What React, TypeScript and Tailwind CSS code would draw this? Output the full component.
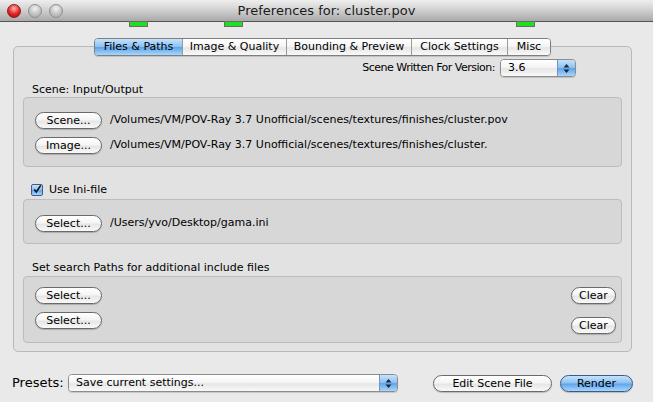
import React from 'react';

const white = 'bg-[linear-gradient(#ffffff,#f5f5f5_45%,#e6e6e6_55%,#f9f9f9)]';
const blue = 'bg-[linear-gradient(#c6e2fb,#8cc1f2_48%,#5fa3ea_52%,#a7d6fc)]';

interface BtnProps {
  label: string;
  w: string;
  primary?: boolean;
}

const AquaButton: React.FC<BtnProps> = ({ label, w, primary }) => (
  <button
    className={`${w} h-[17px] shrink-0 rounded-full border text-[11px] leading-none text-black shadow-[0_1px_1px_rgba(0,0,0,0.2)] ${
      primary ? `${blue} border-[#3b5a86]` : `${white} border-[#6a6a6a]`
    }`}
  >
    {label}
  </button>
);

const Arrows = () => (
  <svg width="7" height="11" viewBox="0 0 7 11">
    <path d="M3.5 1 L6.5 4.5 L0.5 4.5 Z" fill="#1d2a3a" />
    <path d="M3.5 10 L6.5 6.5 L0.5 6.5 Z" fill="#1d2a3a" />
  </svg>
);

interface PopupProps {
  value: string;
  w: string;
}

const Popup: React.FC<PopupProps> = ({ value, w }) => (
  <div
    className={`${w} h-[18px] flex rounded-[4px] border border-[#8c8c8c] overflow-hidden shadow-[0_1px_1px_rgba(0,0,0,0.15)]`}
  >
    <div className={`flex-1 flex items-center pl-[7px] ${white}`}>{value}</div>
    <div className={`w-[18px] flex items-center justify-center border-l border-[#7a93b8] ${blue}`}>
      <Arrows />
    </div>
  </div>
);

const tabs = [
  { label: 'Files & Paths', w: 'w-[87px]' },
  { label: 'Image & Quality', w: 'w-[104px]' },
  { label: 'Bounding & Preview', w: 'w-[125px]' },
  { label: 'Clock Settings', w: 'w-[96px]' },
  { label: 'Misc', w: 'w-[43px]' },
];

const App: React.FC = () => {
  return (
    <div className="relative w-[653px] h-[402px] overflow-hidden bg-[#e9e9e9] text-[11px] text-black font-['Lucida_Grande','DejaVu_Sans',sans-serif]">
      {/* title bar */}
      <div className="relative h-[22px] flex items-center justify-center border-b border-[#555555] bg-[linear-gradient(#eeeeee,#d6d6d6_40%,#a9a9a9)]">
        <div className="absolute left-[7px] top-[4px] flex gap-[7px]">
          <div className="w-[14px] h-[14px] rounded-full border border-[#8a1c1c] bg-[radial-gradient(circle_at_50%_30%,#ffb3b3,#e02222_55%,#a00d0d)]" />
          <div className="w-[14px] h-[14px] rounded-full border border-[#8f8f8f] bg-[radial-gradient(circle_at_50%_30%,#f2f2f2,#c2c2c2_55%,#a3a3a3)]" />
          <div className="w-[14px] h-[14px] rounded-full border border-[#8f8f8f] bg-[radial-gradient(circle_at_50%_30%,#f2f2f2,#c2c2c2_55%,#a3a3a3)]" />
        </div>
        <span className="text-[13px] text-[#1a1a1a]">Preferences for: cluster.pov</span>
      </div>
      {/* little green markers under the title bar */}
      <div className="absolute top-[21px] left-[129px] w-[19px] h-[6px] bg-[#1fe01f] border border-[#6b6b6b]" />
      <div className="absolute top-[21px] left-[224px] w-[19px] h-[6px] bg-[#1fe01f] border border-[#6b6b6b]" />
      <div className="absolute top-[21px] left-[516px] w-[19px] h-[6px] bg-[#1fe01f] border border-[#6b6b6b]" />

      <div className="pt-[16px] pl-[13px]">
        {/* tabs */}
        <div className="relative z-10 w-[619px] h-[18px] -mb-[10px] flex justify-center">
          <div className="flex h-[18px] rounded-[4px] border border-[#7f7f7f] overflow-hidden shadow-[0_1px_1px_rgba(0,0,0,0.15)]">
            {tabs.map((t, i) => (
              <div
                key={t.label}
                className={`${t.w} flex items-center justify-center ${i > 0 ? 'border-l border-[#9a9a9a]' : ''} ${
                  i === 0 ? blue : white
                }`}
              >
                {t.label}
              </div>
            ))}
          </div>
        </div>

        {/* tab view */}
        <div className="w-[619px] h-[306px] rounded-[5px] border border-[#b9b9b9] bg-[#e2e2e2] pt-[12px] px-[9px]">
          <div className="h-[18px] flex items-center justify-end gap-[5px] pr-[46px]">
            <span className="tracking-[-0.5px]">Scene Written For Version:</span>
            <Popup value="3.6" w="w-[76px]" />
          </div>

          <div className="mt-[6px] h-[14px] leading-[14px] pl-[9px]">Scene: Input/Output</div>
          <div className="h-[70px] rounded-[4px] border border-[#bdbdbd] bg-[#d7d7d7] pt-[14px] pl-[11px] flex flex-col gap-[8px]">
            <div className="flex items-center gap-[8px]">
              <AquaButton label="Scene..." w="w-[67px]" />
              <span>/Volumes/VM/POV-Ray 3.7 Unofficial/scenes/textures/finishes/cluster.pov</span>
            </div>
            <div className="flex items-center gap-[8px]">
              <AquaButton label="Image..." w="w-[67px]" />
              <span>/Volumes/VM/POV-Ray 3.7 Unofficial/scenes/textures/finishes/cluster.</span>
            </div>
          </div>

          <div className="mt-[16px] mb-[2px] h-[14px] pl-[8px] flex items-center gap-[6px]">
            <div className={`w-[12px] h-[12px] rounded-[2px] border border-[#3d5c8a] ${blue} flex items-center justify-center`}>
              <svg width="11" height="11" viewBox="0 0 11 11" className="-mt-[2px] ml-[1px]">
                <path d="M1.5 5.5 L4 8.5 L9.5 0.5" fill="none" stroke="#111" strokeWidth="2" />
              </svg>
            </div>
            <span>Use Ini-file</span>
          </div>
          <div className="h-[45px] rounded-[4px] border border-[#bdbdbd] bg-[#d7d7d7] pt-[15px] pl-[11px]">
            <div className="flex items-center gap-[8px]">
              <AquaButton label="Select..." w="w-[67px]" />
              <span>/Users/yvo/Desktop/gama.ini</span>
            </div>
          </div>

          <div className="mt-[17px] h-[14px] leading-[14px] pl-[9px]">Set search Paths for additional include files</div>
          <div className="mt-[1px] h-[67px] rounded-[4px] border border-[#bdbdbd] bg-[#d7d7d7] pt-[10px] pl-[11px] pr-[5px] flex justify-between">
            <div className="flex flex-col gap-[8px]">
              <AquaButton label="Select..." w="w-[67px]" />
              <AquaButton label="Select..." w="w-[67px]" />
            </div>
            <div className="flex flex-col gap-[13px]">
              <AquaButton label="Clear" w="w-[45px]" />
              <AquaButton label="Clear" w="w-[45px]" />
            </div>
          </div>
        </div>
      </div>

      {/* bottom row */}
      <div className="mt-[22px] h-[18px] pl-[12px] flex items-center">
        <span className="text-[13px] w-[56px]">Presets:</span>
        <Popup value="Save current settings..." w="w-[330px]" />
        <div className="ml-[35px] flex gap-[8px]">
          <AquaButton label="Edit Scene File" w="w-[119px]" />
          <AquaButton label="Render" w="w-[73px]" primary />
        </div>
      </div>
    </div>
  );
};

export default App;
